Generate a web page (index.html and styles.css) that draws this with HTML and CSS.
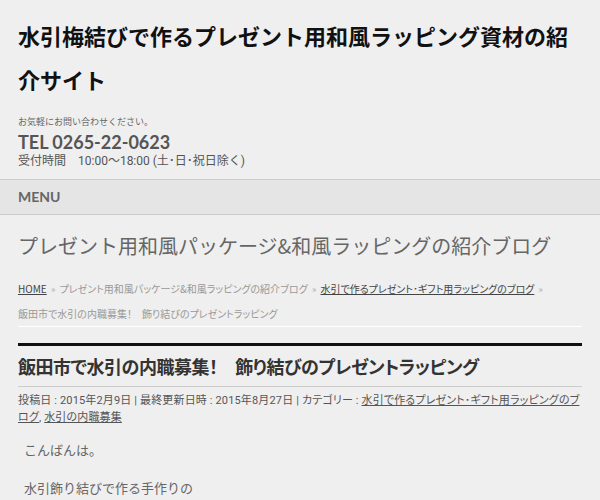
FILE: index.html
```html
<!DOCTYPE html>
<html lang="ja">
<head>
<meta charset="UTF-8">
<meta name="viewport" content="width=device-width, initial-scale=1.0">
<title>水引梅結びで作るプレゼント用和風ラッピング資材の紹介サイト</title>
<link rel="stylesheet" href="styles.css">
</head>
<body>
    <header class="site-header">
        <h1 class="site-title">水引梅結びで作るプレゼント用和風ラッピング資材の紹介サイト</h1>
        <div class="contact">
            <p class="contact-note">お気軽にお問い合わせください。</p>
            <p class="tel">TEL 0265-22-0623</p>
            <p class="hours">受付時間　10:00～18:00 (土･日･祝日除く)</p>
        </div>
    </header>

    <nav class="menu">MENU</nav>

    <main class="content">
        <h2 class="blog-title">プレゼント用和風パッケージ&amp;和風ラッピングの紹介ブログ</h2>

        <div class="breadcrumb">
            <a href="#">HOME</a> <span class="sep">»</span>
            プレゼント用和風パッケージ&amp;和風ラッピングの紹介ブログ <span class="sep">»</span>
            <a href="#">水引で作るプレゼント･ギフト用ラッピングのブログ</a> <span class="sep">»</span>
            <span class="current">飯田市で水引の内職募集！　飾り結びのプレゼントラッピング</span>
        </div>

        <article class="post">
            <h3 class="post-title">飯田市で水引の内職募集！　飾り結びのプレゼントラッピング</h3>
            <div class="post-meta">
                投稿日 : 2015年2月9日 | 最終更新日時 : 2015年8月27日 | カテゴリー : <a href="#">水引で作るプレゼント･ギフト用ラッピングのブログ</a>, <a href="#">水引の内職募集</a>
            </div>
            <div class="post-body">
                <p>こんばんは。</p>
                <p>水引飾り結びで作る手作りの</p>
            </div>
        </article>
    </main>
</body>
</html>
```

FILE: styles.css
```css
body {
    margin: 0;
    background-color: #efefef;
    font-family: "Noto Sans CJK JP", sans-serif;
    color: #555;
}
p {
    margin: 0;
}
.site-header {
    padding: 13px 18px 10px;
}
.site-title {
    margin: 0;
    font-size: 22px;
    line-height: 44px;
    font-weight: bold;
    color: #111;
}
.contact {
    margin-top: 13px;
}
.contact-note {
    font-size: 9px;
    line-height: 16px;
    color: #666;
}
.tel {
    margin-top: 1px;
    font-family: Lato, "Noto Sans CJK JP", sans-serif;
    font-weight: bold;
    font-size: 18px;
    line-height: 22px;
    color: #555;
}
.hours {
    font-family: Roboto, "Noto Sans CJK JP", sans-serif;
    font-size: 12px;
    line-height: 16px;
    color: #555;
}
.menu {
    border-top: 1px solid #ccc;
    border-bottom: 1px solid #ccc;
    background-color: #e5e5e5;
    padding: 0 18px;
    line-height: 34px;
    font-family: Lato, sans-serif;
    font-weight: bold;
    font-size: 14px;
    color: #666;
}
.content {
    padding: 0 18px;
}
.blog-title {
    margin: 16px 0 0;
    font-size: 20px;
    line-height: 30px;
    font-weight: normal;
    color: #666;
}
.breadcrumb {
    margin-top: 16px;
    font-size: 10px;
    line-height: 24px;
    color: #999;
    border-bottom: 1px solid #fff;
    font-feature-settings: "palt";
}
.breadcrumb a {
    color: #444;
}
.breadcrumb .sep {
    color: #aaa;
    font-size: 9px;
    margin: 0 2px;
}
.breadcrumb .current {
    white-space: nowrap;
}
.post {
    margin-top: 16px;
    border-top: 3px solid #111;
}
.post-title {
    margin: 0;
    padding: 6px 0 6px;
    font-size: 18px;
    line-height: 28px;
    font-weight: bold;
    letter-spacing: -0.45px;
    color: #333;
    border-bottom: 1px solid #ccc;
    font-feature-settings: "palt";
}
.post-meta {
    margin-top: 5px;
    font-family: Roboto, "Noto Sans CJK JP", sans-serif;
    font-size: 11px;
    line-height: 17px;
    letter-spacing: 0.15px;
    color: #555;
    font-feature-settings: "palt";
}
.post-meta a {
    color: #555;
}
.post-body {
    padding: 0 6px;
    font-size: 13px;
    line-height: 22px;
    color: #666;
}
.post-body p {
    margin-top: 16px;
}
.post-body p:first-child {
    margin-top: 13px;
}
```
